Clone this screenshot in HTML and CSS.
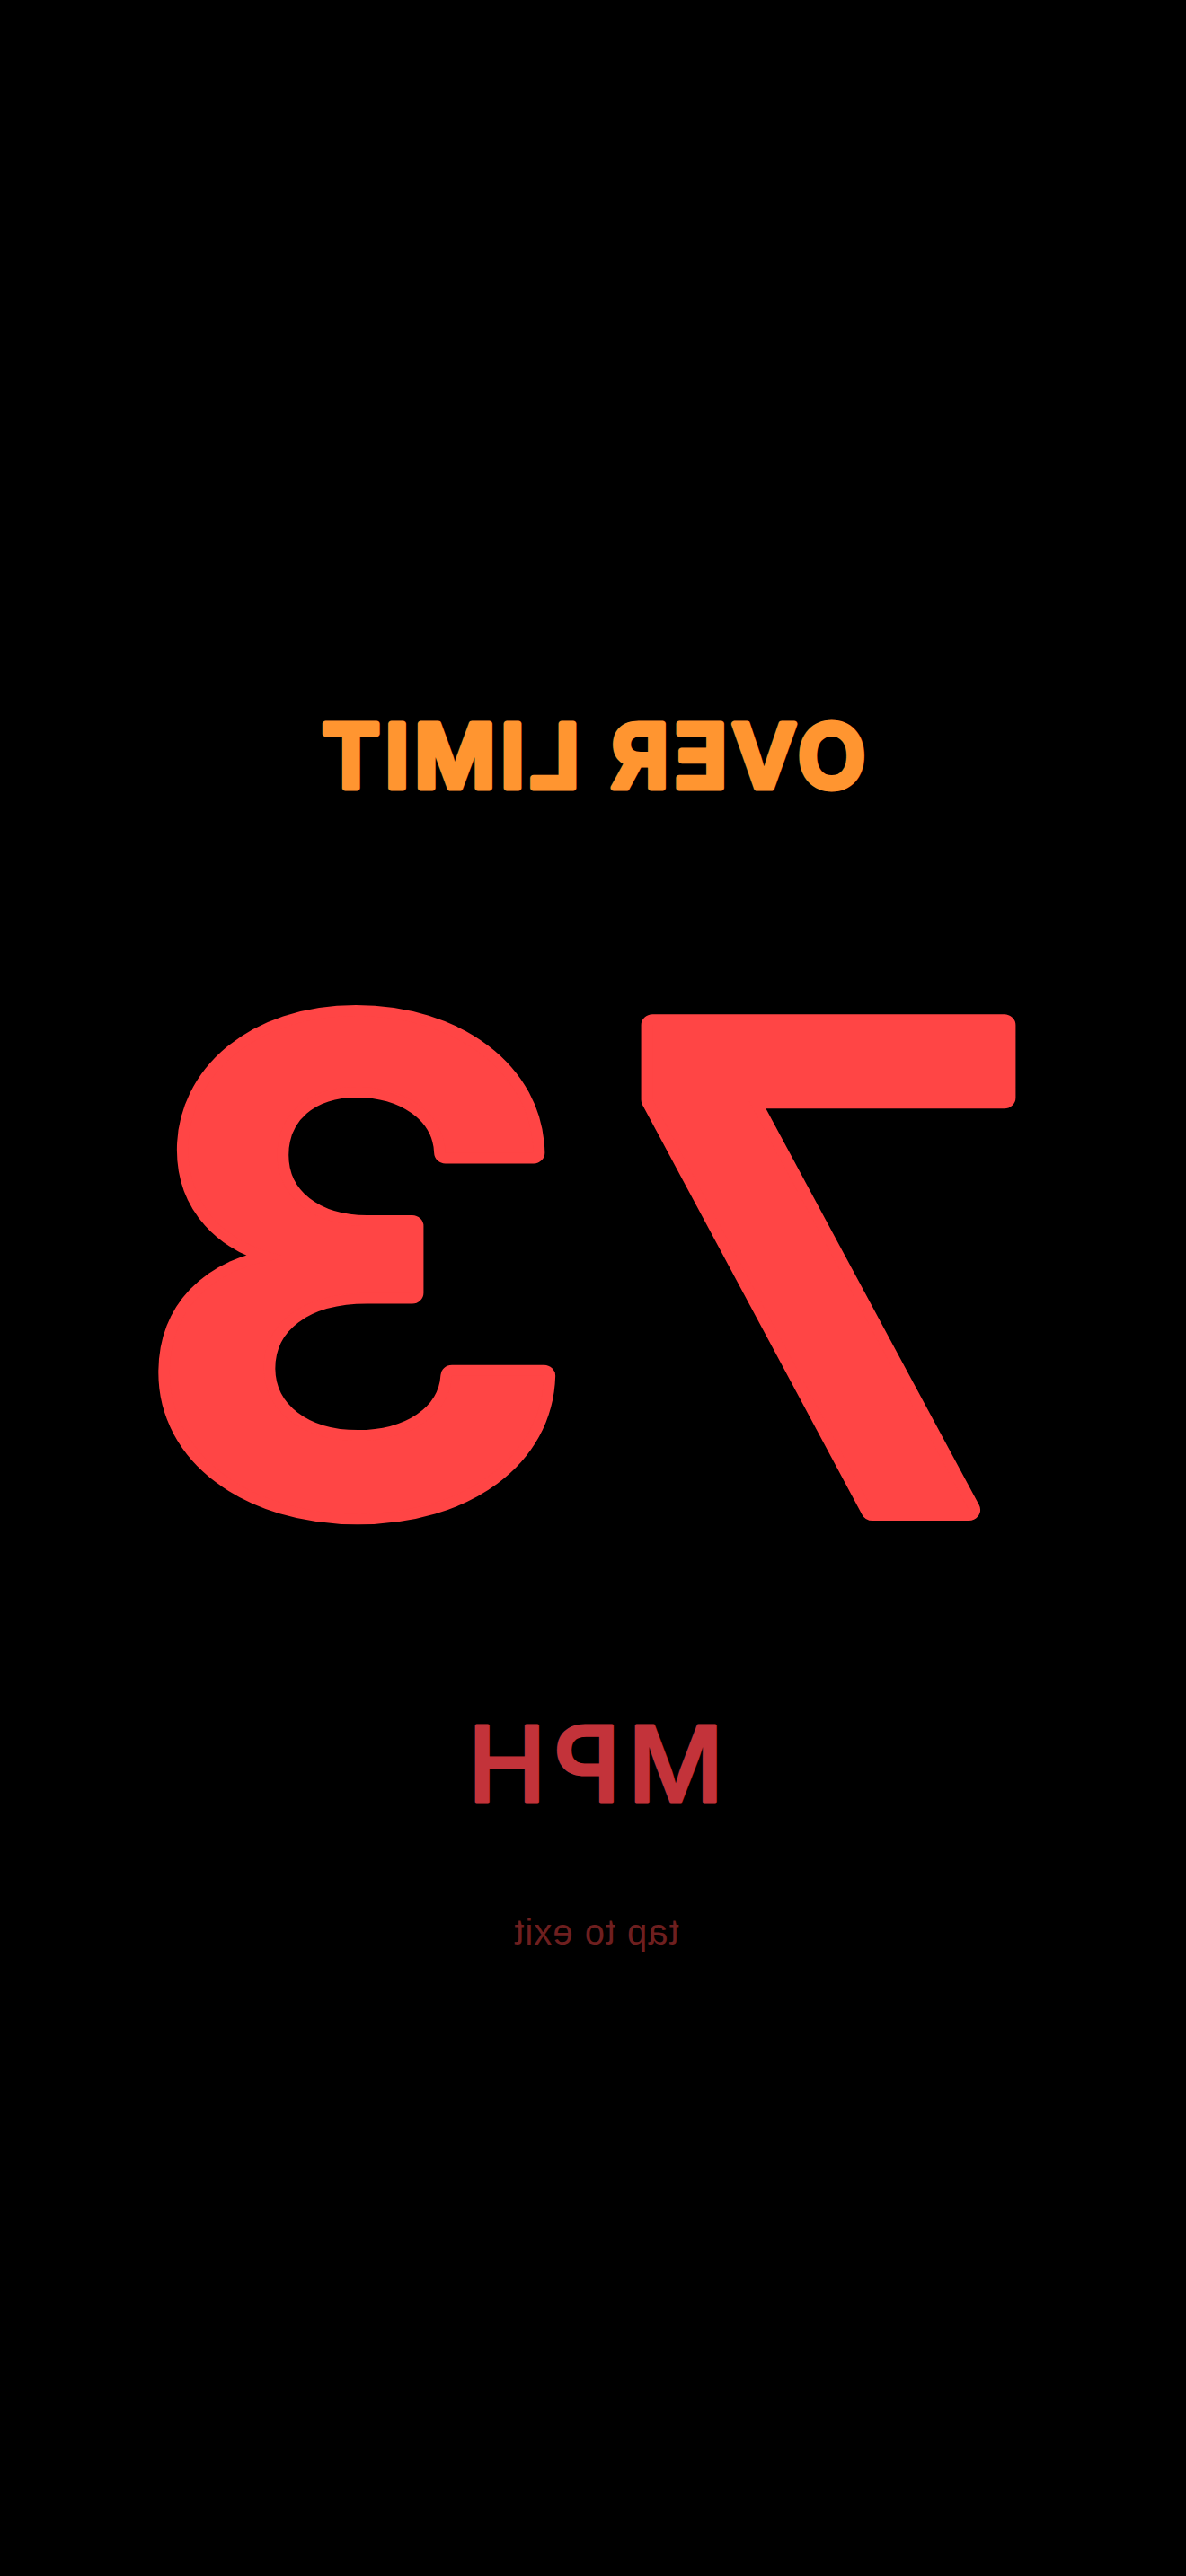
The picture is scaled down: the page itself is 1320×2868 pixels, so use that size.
FILE: index.html
```html
<!DOCTYPE html>
<html lang="en">
<head>
<meta charset="utf-8">
<title>HUD Speed</title>
<link rel="stylesheet" href="styles.css">
</head>
<body>
<main class="hud">
  <svg class="line line-status" width="1320" height="130" viewBox="0 0 1320 130">
    <text class="status" x="662" y="107" text-anchor="middle">OVER LIMIT</text>
  </svg>
  <svg class="line line-speed" width="1320" height="680" viewBox="0 0 1320 680">
    <text class="speed" transform="translate(398 621) scale(1.065 1)" x="0" y="0" text-anchor="middle">7</text>
    <text class="speed" transform="translate(922 618) scale(1.052 1)" x="0" y="0" text-anchor="middle">3</text>
  </svg>
  <svg class="line line-unit" width="1320" height="150" viewBox="0 0 1320 150">
    <text class="unit" x="661" y="126" text-anchor="middle">MPH</text>
  </svg>
  <div class="hint">tap to exit</div>
</main>
</body>
</html>
```
FILE: styles.css
```css
html, body {
  margin: 0;
  padding: 0;
  background: #000;
}
body {
  width: 1320px;
  height: 2868px;
  overflow: hidden;
  font-family: Inter, "Noto Sans", "Liberation Sans", sans-serif;
}
.hud {
  display: flex;
  flex-direction: column;
  align-items: center;
  padding-top: 770px;
  transform: scaleX(-1);
}
.line {
  display: block;
  overflow: visible;
}
.line-speed {
  margin-top: 160px;
}
.line-unit {
  margin-top: 140px;
}
.status,
.speed,
.unit {
  font-family: Inter, "Noto Sans", sans-serif;
  stroke-linejoin: round;
  stroke-linecap: round;
  paint-order: stroke fill;
}
.status {
  font-size: 98px;
  font-weight: 600;
  letter-spacing: 5.5px;
  fill: #ff9530;
  stroke: #ff9530;
  stroke-width: 7px;
}
.speed {
  font-size: 742px;
  font-weight: 600;
  fill: #ff4545;
  stroke: #ff4545;
  stroke-width: 24px;
}
.unit {
  font-size: 117px;
  font-weight: 500;
  letter-spacing: 8px;
  fill: #c3333a;
  stroke: #c3333a;
  stroke-width: 3px;
}
.hint {
  margin-top: 101px;
  padding-right: 7px;
  font-size: 40px;
  line-height: 1;
  font-weight: 400;
  color: #6e1f1f;
  letter-spacing: 1px;
  font-family: "Liberation Sans", Arial, sans-serif;
}
```
